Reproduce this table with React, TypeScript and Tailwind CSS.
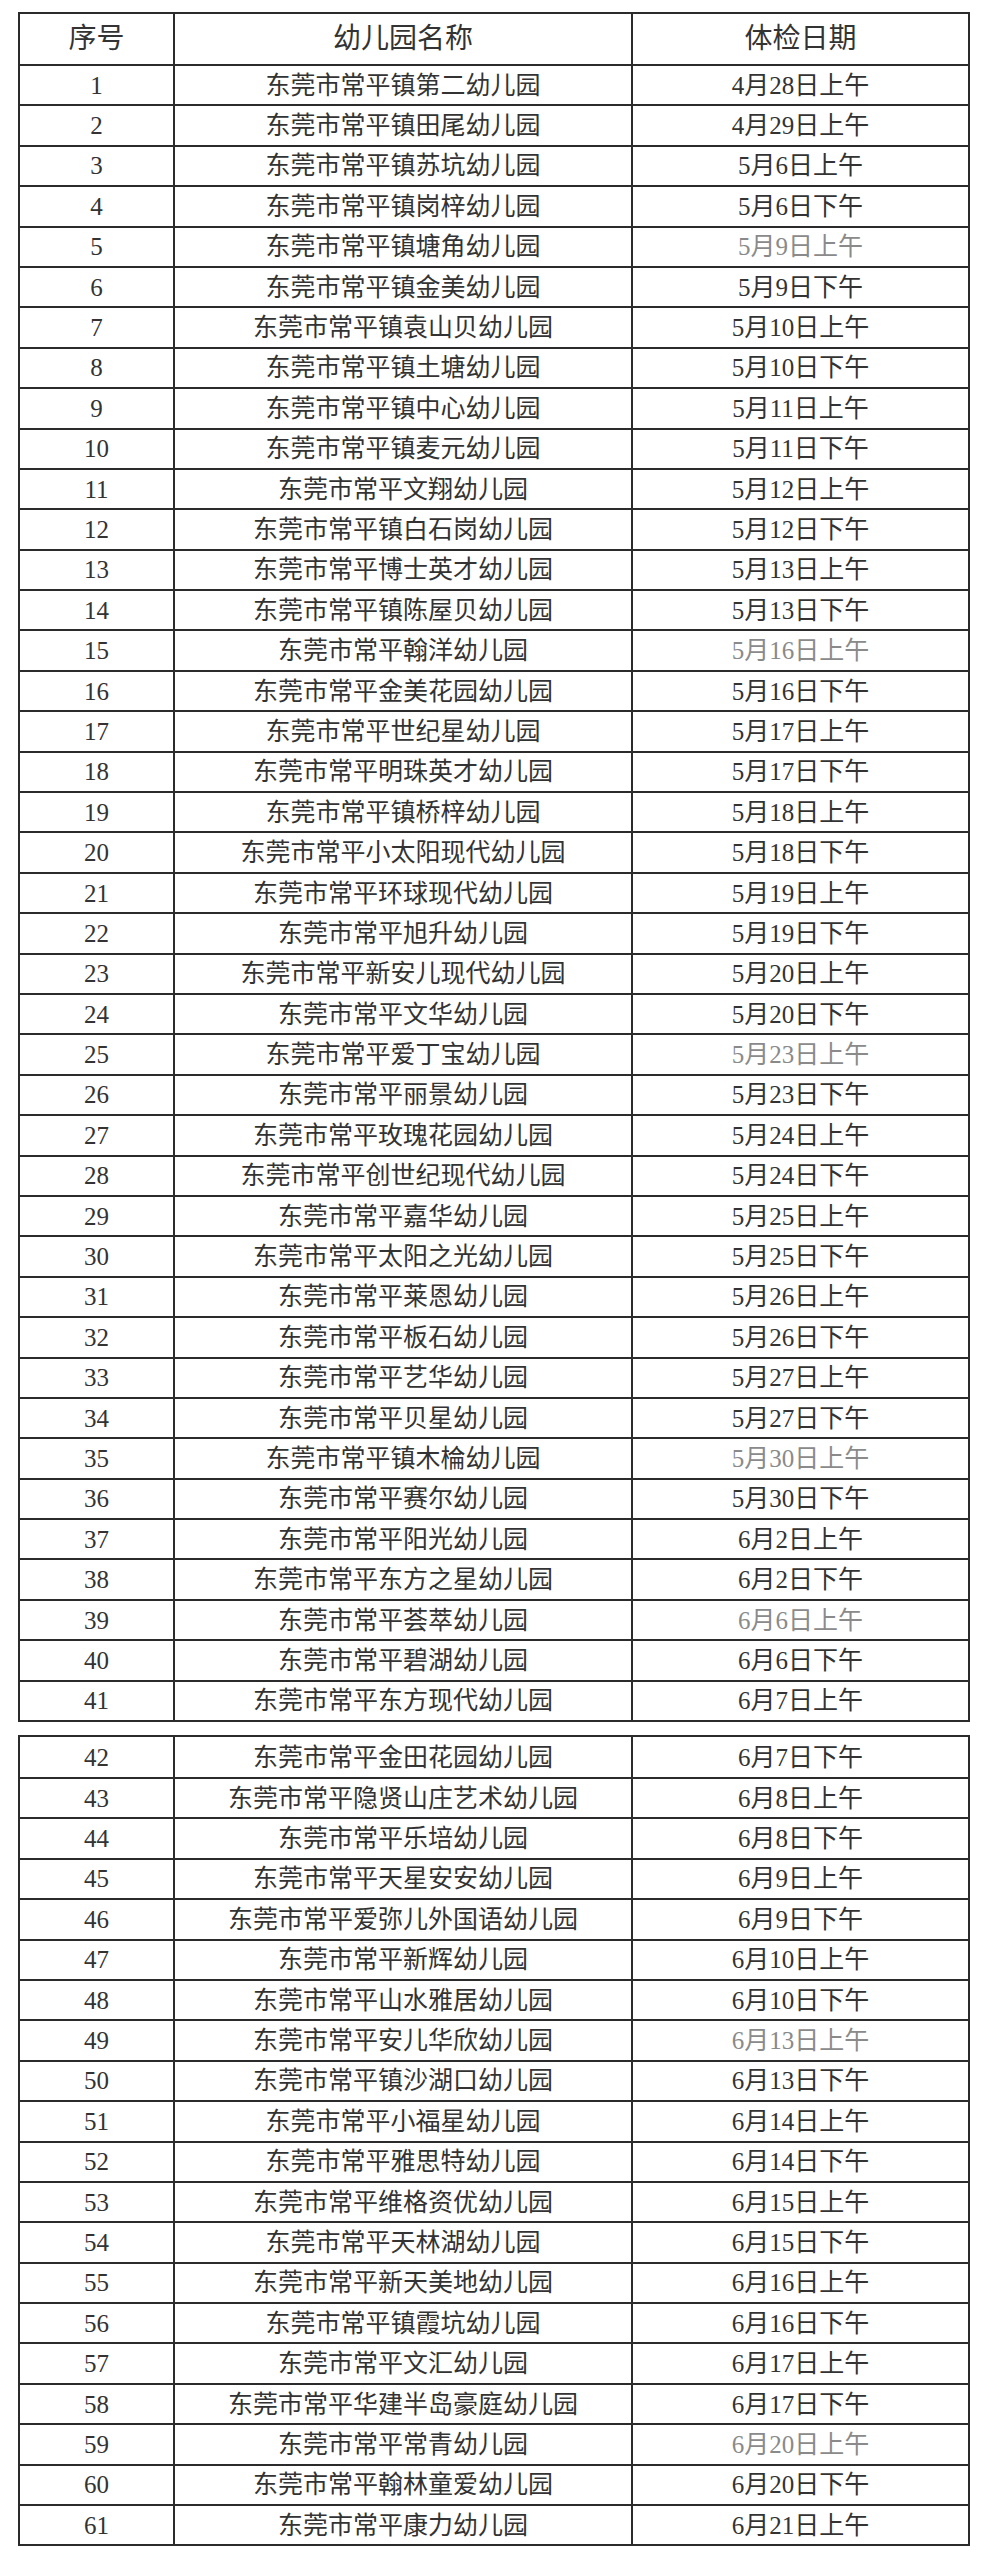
const rows: [string, string][] = [
  ["东莞市常平镇第二幼儿园", "4月28日上午"],
  ["东莞市常平镇田尾幼儿园", "4月29日上午"],
  ["东莞市常平镇苏坑幼儿园", "5月6日上午"],
  ["东莞市常平镇岗梓幼儿园", "5月6日下午"],
  ["东莞市常平镇塘角幼儿园", "5月9日上午"],
  ["东莞市常平镇金美幼儿园", "5月9日下午"],
  ["东莞市常平镇袁山贝幼儿园", "5月10日上午"],
  ["东莞市常平镇土塘幼儿园", "5月10日下午"],
  ["东莞市常平镇中心幼儿园", "5月11日上午"],
  ["东莞市常平镇麦元幼儿园", "5月11日下午"],
  ["东莞市常平文翔幼儿园", "5月12日上午"],
  ["东莞市常平镇白石岗幼儿园", "5月12日下午"],
  ["东莞市常平博士英才幼儿园", "5月13日上午"],
  ["东莞市常平镇陈屋贝幼儿园", "5月13日下午"],
  ["东莞市常平翰洋幼儿园", "5月16日上午"],
  ["东莞市常平金美花园幼儿园", "5月16日下午"],
  ["东莞市常平世纪星幼儿园", "5月17日上午"],
  ["东莞市常平明珠英才幼儿园", "5月17日下午"],
  ["东莞市常平镇桥梓幼儿园", "5月18日上午"],
  ["东莞市常平小太阳现代幼儿园", "5月18日下午"],
  ["东莞市常平环球现代幼儿园", "5月19日上午"],
  ["东莞市常平旭升幼儿园", "5月19日下午"],
  ["东莞市常平新安儿现代幼儿园", "5月20日上午"],
  ["东莞市常平文华幼儿园", "5月20日下午"],
  ["东莞市常平爱丁宝幼儿园", "5月23日上午"],
  ["东莞市常平丽景幼儿园", "5月23日下午"],
  ["东莞市常平玫瑰花园幼儿园", "5月24日上午"],
  ["东莞市常平创世纪现代幼儿园", "5月24日下午"],
  ["东莞市常平嘉华幼儿园", "5月25日上午"],
  ["东莞市常平太阳之光幼儿园", "5月25日下午"],
  ["东莞市常平莱恩幼儿园", "5月26日上午"],
  ["东莞市常平板石幼儿园", "5月26日下午"],
  ["东莞市常平艺华幼儿园", "5月27日上午"],
  ["东莞市常平贝星幼儿园", "5月27日下午"],
  ["东莞市常平镇木棆幼儿园", "5月30日上午"],
  ["东莞市常平赛尔幼儿园", "5月30日下午"],
  ["东莞市常平阳光幼儿园", "6月2日上午"],
  ["东莞市常平东方之星幼儿园", "6月2日下午"],
  ["东莞市常平荟萃幼儿园", "6月6日上午"],
  ["东莞市常平碧湖幼儿园", "6月6日下午"],
  ["东莞市常平东方现代幼儿园", "6月7日上午"],
  ["东莞市常平金田花园幼儿园", "6月7日下午"],
  ["东莞市常平隐贤山庄艺术幼儿园", "6月8日上午"],
  ["东莞市常平乐培幼儿园", "6月8日下午"],
  ["东莞市常平天星安安幼儿园", "6月9日上午"],
  ["东莞市常平爱弥儿外国语幼儿园", "6月9日下午"],
  ["东莞市常平新辉幼儿园", "6月10日上午"],
  ["东莞市常平山水雅居幼儿园", "6月10日下午"],
  ["东莞市常平安儿华欣幼儿园", "6月13日上午"],
  ["东莞市常平镇沙湖口幼儿园", "6月13日下午"],
  ["东莞市常平小福星幼儿园", "6月14日上午"],
  ["东莞市常平雅思特幼儿园", "6月14日下午"],
  ["东莞市常平维格资优幼儿园", "6月15日上午"],
  ["东莞市常平天林湖幼儿园", "6月15日下午"],
  ["东莞市常平新天美地幼儿园", "6月16日上午"],
  ["东莞市常平镇霞坑幼儿园", "6月16日下午"],
  ["东莞市常平文汇幼儿园", "6月17日上午"],
  ["东莞市常平华建半岛豪庭幼儿园", "6月17日下午"],
  ["东莞市常平常青幼儿园", "6月20日上午"],
  ["东莞市常平翰林童爱幼儿园", "6月20日下午"],
  ["东莞市常平康力幼儿园", "6月21日上午"],
];

// dates that came out faint in the scan
const faint = new Set([5, 15, 25, 35, 39, 49, 59]);

const cell = "border-2 border-[#2b2b2b] p-0 text-center align-middle";

function Row({ n, first }: { n: number; first?: boolean }) {
  const [name, date] = rows[n - 1];
  return (
    <tr className={first ? "h-[42px]" : "h-[40.4px]"}>
      <td className={cell}>{n}</td>
      <td className={cell}>{name}</td>
      <td className={`${cell} ${faint.has(n) ? "text-[#8a8a8a]" : ""}`}>{date}</td>
    </tr>
  );
}

function Cols() {
  return (
    <colgroup>
      <col className="w-[155px]" />
      <col className="w-[458px]" />
      <col className="w-[337px]" />
    </colgroup>
  );
}

export default function App() {
  const tableCls =
    "w-[950px] table-fixed border-collapse text-[25px] leading-none text-[#333]";
  return (
    <div
      className="min-h-[2560px] bg-white pt-[12px] pl-[18px]"
      style={{ fontFamily: '"Liberation Serif", "Noto Sans CJK SC", serif' }}
    >
      <table className={tableCls}>
        <Cols />
        <thead>
          <tr className="h-[52px] text-[28px]">
            <th className={`${cell} font-normal`}>序号</th>
            <th className={`${cell} font-normal`}>幼儿园名称</th>
            <th className={`${cell} font-normal`}>体检日期</th>
          </tr>
        </thead>
        <tbody>
          {Array.from({ length: 41 }, (_, i) => (
            <Row key={i} n={i + 1} />
          ))}
        </tbody>
      </table>
      <table className={`${tableCls} mt-[13px]`}>
        <Cols />
        <tbody>
          {Array.from({ length: 20 }, (_, i) => (
            <Row key={i} n={i + 42} first={i === 0} />
          ))}
        </tbody>
      </table>
    </div>
  );
}
